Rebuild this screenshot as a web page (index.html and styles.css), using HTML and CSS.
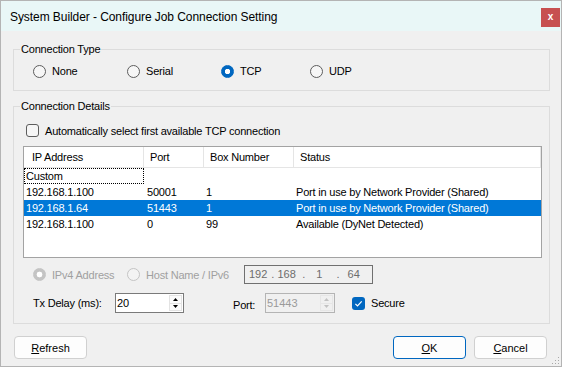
FILE: index.html
```html
<!DOCTYPE html>
<html>
<head>
<meta charset="utf-8">
<link rel="stylesheet" href="styles.css">
</head>
<body>
<div class="window">
  <div class="titlebar">
    <span class="title">System Builder - Configure Job Connection Setting</span>
    <span class="close">x</span>
  </div>

  <fieldset class="group group-type">
    <legend>Connection Type</legend>
    <div class="radio-row">
      <label class="opt w94"><span class="rb"></span>None</label>
      <label class="opt w94"><span class="rb"></span>Serial</label>
      <label class="opt w89"><span class="rb on"></span>TCP</label>
      <label class="opt"><span class="rb"></span>UDP</label>
    </div>
  </fieldset>

  <fieldset class="group group-details">
    <legend>Connection Details</legend>
    <label class="check-row"><span class="cb"></span>Automatically select first available TCP connection</label>

    <div class="list">
      <div class="lv-head">
        <div class="c c1 h1">IP Address</div>
        <div class="c c2">Port</div>
        <div class="c c3">Box Number</div>
        <div class="c c4">Status</div>
      </div>
      <div class="lv-row">
        <div class="c c1 focus">Custom</div>
      </div>
      <div class="lv-row">
        <div class="c c1">192.168.1.100</div>
        <div class="c c2">50001</div>
        <div class="c c3">1</div>
        <div class="c c4">Port in use by Network Provider (Shared)</div>
      </div>
      <div class="lv-row sel">
        <div class="c c1">192.168.1.64</div>
        <div class="c c2">51443</div>
        <div class="c c3">1</div>
        <div class="c c4">Port in use by Network Provider (Shared)</div>
      </div>
      <div class="lv-row">
        <div class="c c1">192.168.1.100</div>
        <div class="c c2">0</div>
        <div class="c c3">99</div>
        <div class="c c4">Available (DyNet Detected)</div>
      </div>
    </div>

    <div class="addr-row">
      <label class="opt w94 dis"><span class="rb dis-on"></span>IPv4 Address</label>
      <label class="opt w117 dis"><span class="rb dis-off"></span>Host Name / IPv6</label>
      <div class="ipbox">
        <span class="seg s1">192</span><span class="seg d1">.</span><span class="seg s2">168</span><span class="seg d2">.</span><span class="seg s3">1</span><span class="seg d3">.</span><span class="seg s4">64</span>
      </div>
    </div>

    <div class="tx-row">
      <span class="tx-label">Tx Delay (ms):</span>
      <div class="num">
        <span class="num-val">20</span>
        <div class="spin">
          <span class="spin-btn"><svg width="5" height="3" viewBox="0 0 5 3"><polygon points="0,3 5,3 2.5,0" fill="#000"/></svg></span>
          <span class="spin-btn"><svg width="5" height="3" viewBox="0 0 5 3"><polygon points="0,0 5,0 2.5,3" fill="#000"/></svg></span>
        </div>
      </div>
      <span class="port-label">Port:</span>
      <div class="num num-dis">
        <span class="num-val">51443</span>
        <div class="spin">
          <span class="spin-btn"><svg width="5" height="3" viewBox="0 0 5 3"><polygon points="0,3 5,3 2.5,0" fill="#c2c2c2"/></svg></span>
          <span class="spin-btn"><svg width="5" height="3" viewBox="0 0 5 3"><polygon points="0,0 5,0 2.5,3" fill="#c2c2c2"/></svg></span>
        </div>
      </div>
      <label class="secure"><span class="cb on"><svg width="13" height="13" viewBox="0 0 13 13"><path d="M3.4 6.9 L5.5 9 L9.7 4.3" fill="none" stroke="#fff" stroke-width="1.2"/></svg></span>Secure</label>
    </div>
  </fieldset>

  <div class="buttons">
    <div class="btn btn-refresh"><span><u>R</u>efresh</span></div>
    <div class="btn btn-ok"><span><u>O</u>K</span></div>
    <div class="btn"><span><u>C</u>ancel</span></div>
  </div>

  <svg class="grip" width="9" height="9" viewBox="0 0 9 9">
    <rect x="7" y="1" width="1" height="1" fill="#a8a8a8"/>
    <rect x="4" y="4" width="1" height="1" fill="#a8a8a8"/>
    <rect x="7" y="4" width="1" height="1" fill="#a8a8a8"/>
    <rect x="1" y="7" width="1" height="1" fill="#a8a8a8"/>
    <rect x="4" y="7" width="1" height="1" fill="#a8a8a8"/>
    <rect x="7" y="7" width="1" height="1" fill="#a8a8a8"/>
  </svg>
</div>
</body>
</html>
```
FILE: styles.css
```css
* { box-sizing: border-box; }
html, body { margin: 0; padding: 0; }
body {
  width: 562px;
  height: 367px;
  overflow: hidden;
  background: #f0f0f0;
  font-family: "Liberation Sans", Arial, sans-serif;
  font-size: 11px;
  letter-spacing: -0.2px;
  color: #000;
}
.window {
  position: relative;
  width: 562px;
  height: 367px;
  border: 1px solid #b4b4b4;
  background: #f0f0f0;
}
.titlebar {
  display: flex;
  height: 30px;
  background: #e9f7f7;
}
.title {
  font-size: 12px;
  letter-spacing: -0.07px;
  line-height: 14px;
  padding: 9px 0 0 9px;
  color: #000;
}
.close {
  margin: 7px 1px 0 auto;
  width: 19px;
  height: 19px;
  background: #c75050;
  color: #fff;
  font-weight: bold;
  font-size: 10px;
  letter-spacing: 0;
  line-height: 18px;
  text-align: center;
}

/* group boxes */
.group {
  margin: 0 11px 0 12px;
  padding: 0;
  border: 1px solid #dcdcdc;
  min-width: 0;
}
.group legend {
  margin-left: 6px;
  padding: 0 1px;
  line-height: 13px;
  height: 13px;
}
.group-type { margin-top: 12px; }
.group-details { margin-top: 9px; padding-bottom: 10px; }

.radio-row {
  display: flex;
  align-items: center;
  height: 34px;
  padding: 0 0 4px 19px;
}
.opt {
  display: flex;
  align-items: center;
  gap: 6px;
  flex: none;
}
.w94 { width: 94px; }
.w89 { width: 89px; }
.w117 { width: 117px; }
.dis { color: #a0a0a0; }

.rb {
  flex: none;
  width: 13px;
  height: 13px;
  border-radius: 50%;
  border: 1px solid #5d5d5d;
  background: #f6f6f6;
}
.rb.on {
  border-color: #0067c0;
  background: radial-gradient(circle, #fff 0, #fff 2.4px, #0067c0 3px);
}
.rb.dis-on {
  border-color: #c4c4c4;
  background: radial-gradient(circle, #fff 0, #fff 2.6px, #c4c4c4 3.2px);
}
.rb.dis-off {
  border-color: #c4c4c4;
  background: #f3f3f3;
}

.check-row {
  display: flex;
  align-items: center;
  gap: 6px;
  height: 13px;
  margin: 11px 0 0 12px;
}
.cb {
  flex: none;
  width: 13px;
  height: 13px;
  border: 1px solid #5d5d5d;
  border-radius: 3px;
  background: #f6f6f6;
}
.cb.on {
  border: none;
  background: #0067c0;
  display: block;
}
.cb.on svg { display: block; }

/* list view */
.list {
  margin: 9px 0 0 9px;
  width: 519px;
  height: 112px;
  border: 1px solid #a3a3a3;
  background: #fff;
}
.lv-head {
  display: flex;
  height: 21px;
  border-bottom: 1px solid #e5e5e5;
}
.lv-head .c {
  display: flex;
  align-items: center;
  border-right: 1px solid #e5e5e5;
  padding-left: 6px;
}
.lv-head .h1 { padding-left: 8px; }
.c { flex: none; white-space: nowrap; }
.c1 { width: 120px; }
.c2 { width: 60px; }
.c3 { width: 90px; }
.c4 { width: 247px; }
.lv-row {
  display: flex;
  height: 16px;
}
.lv-row .c {
  height: 16px;
  line-height: 16px;
  padding-left: 2px;
}
.lv-row .c2 { padding-left: 3px; }
.lv-row .focus {
  border: 1px dotted #000;
  line-height: 14px;
  padding-left: 1px;
}
.lv-row.sel {
  background: #0078d7;
  color: #fff;
}

/* address row */
.addr-row {
  display: flex;
  align-items: center;
  height: 19px;
  margin-top: 7px;
  padding-left: 19px;
}
.ipbox {
  display: flex;
  align-items: center;
  width: 129px;
  height: 19px;
  border: 1px solid #707070;
  background: #f0f0f0;
  color: #6d6d6d;
  letter-spacing: 0;
  padding: 0 0 1px 4px;
}
.d1 { margin-left: 4px; }
.s2 { margin-left: 3px; }
.d2 { margin-left: 6.5px; }
.s3 { margin-left: 11px; }
.d3 { margin-left: 14px; }
.s4 { margin-left: 8px; }

/* tx row */
.tx-row {
  display: flex;
  align-items: center;
  height: 20px;
  margin-top: 9px;
  padding-left: 19px;
}
.tx-label { width: 82px; flex: none; }
.num {
  flex: none;
  display: flex;
  width: 69px;
  height: 20px;
  border: 1px solid #7a7a7a;
  background: #fff;
  letter-spacing: 0;
}
.num-val {
  flex: 1;
  padding: 2px 0 0 1px;
  line-height: 14px;
}
.spin {
  flex: none;
  width: 14px;
  display: flex;
  flex-direction: column;
  padding: 1px 1px 1px 0;
}
.spin-btn {
  flex: 1;
  display: flex;
  align-items: center;
  justify-content: center;
  border: 1px solid #e3e3e3;
  background: #fbfbfb;
}
.spin-btn + .spin-btn { border-top: none; }
.spin-btn svg { display: block; }
.port-label {
  flex: none;
  width: 32px;
  margin-left: 49px;
  padding-top: 4px;
}
.num-dis {
  width: 70px;
  border-color: #b4b4b4;
  background: #f0f0f0;
  color: #9a9a9a;
}
.num-dis .spin-btn {
  border-color: #e6e6e6;
  background: #f0f0f0;
}
.secure {
  display: flex;
  align-items: center;
  gap: 6px;
  margin-left: 17px;
}

/* buttons */
.buttons {
  display: flex;
  gap: 8px;
  margin: 12px 14px 0 13px;
}
.btn {
  width: 73px;
  height: 23px;
  border: 1px solid #d0d0d0;
  border-radius: 4px;
  background: #fdfdfd;
  display: flex;
  align-items: center;
  justify-content: center;
  letter-spacing: 0;
}
.btn-refresh { margin-right: auto; }
.btn-ok { border-color: #0067c0; }

.grip {
  position: absolute;
  right: 1px;
  bottom: 1px;
}
```
